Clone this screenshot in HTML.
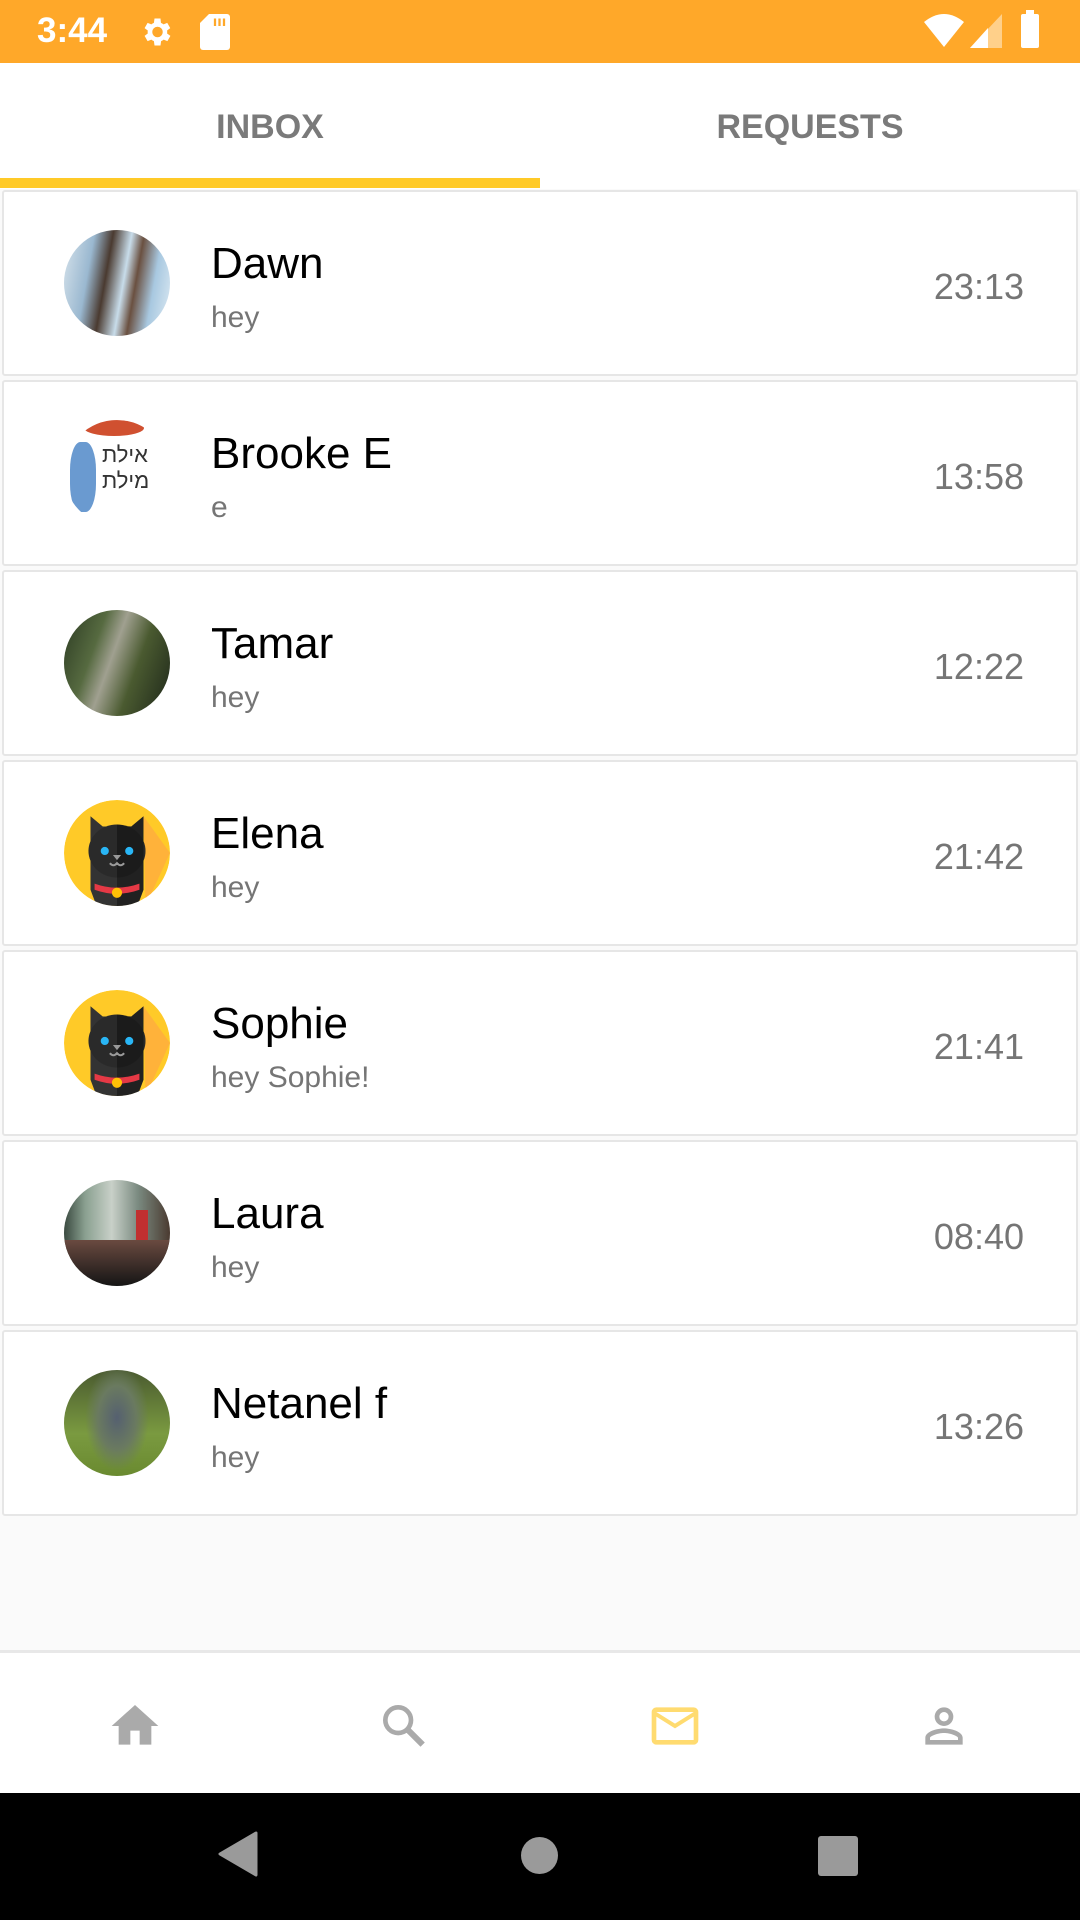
<!DOCTYPE html>
<html><head><meta charset="utf-8"><style>
*{margin:0;padding:0;box-sizing:border-box}
body{width:1080px;height:1920px;background:#fafafa;font-family:"Liberation Sans",Roboto,sans-serif;position:relative;overflow:hidden}
.status{position:absolute;top:0;left:0;width:1080px;height:63px;background:#ffa829;color:#fff}
.tabs{position:absolute;top:63px;left:0;width:1080px;height:126px;background:#fff}
.tab{position:absolute;top:0;width:540px;height:126px;line-height:128px;text-align:center;font-size:34px;font-weight:bold;color:#7a7a7a}
.ind{position:absolute;left:0;top:178px;width:540px;height:10px;background:#ffca28}
.card{position:absolute;left:2px;width:1076px;height:186px;background:#fff;border:2px solid #e6e6e6;border-radius:3px}
.av{position:absolute;left:60px;top:38px;width:106px;height:106px;border-radius:50%;overflow:hidden}
.nm{position:absolute;left:207px;top:47px;font-size:44px;color:#000}
.sb{position:absolute;left:207px;top:109px;font-size:30px;color:#757575}
.tm{position:absolute;right:52px;top:74px;font-size:36px;color:#757575}
.nav{position:absolute;top:1650px;left:0;width:1080px;height:143px;background:#fff;border-top:3px solid #e8e8e8}
.sys{position:absolute;top:1793px;left:0;width:1080px;height:127px;background:#000}
</style></head><body>
<div class="status">
<div style="position:absolute;left:37px;top:11px;font-size:35px;font-weight:bold">3:44</div>
<svg style="position:absolute;left:138px;top:14px" width="36" height="36" viewBox="0 0 24 24"><path fill="#fff" d="M19.4 13a7.5 7.5 0 000-2l2.1-1.6-2-3.5-2.5 1a7 7 0 00-1.7-1L15 3h-4l-.4 2.9a7 7 0 00-1.7 1l-2.5-1-2 3.5L6.5 11a7.5 7.5 0 000 2l-2.1 1.6 2 3.5 2.5-1a7 7 0 001.7 1L11 21h4l.4-2.9a7 7 0 001.7-1l2.5 1 2-3.5zM13 15.5A3.5 3.5 0 1113 8.5a3.5 3.5 0 010 7z"/></svg>
<svg style="position:absolute;left:200px;top:14px" width="30" height="36" viewBox="0 0 20 24"><path fill="#fff" d="M6 0h12a2 2 0 012 2v20a2 2 0 01-2 2H2a2 2 0 01-2-2V6z"/><path stroke="#ffa829" stroke-width="1.5" d="M10 3v5M13 3v5M16 3v5"/></svg>
<svg style="position:absolute;left:924px;top:14px" width="40" height="34" viewBox="0 0 40 34"><path fill="#fff" d="M0 8Q20-8 40 8L20 33z"/></svg>
<svg style="position:absolute;left:970px;top:14px" width="32" height="34" viewBox="0 0 32 34"><path fill="#ffd08a" d="M32 0V34H0z"/><path fill="#fff" d="M18 14V34H0z"/></svg>
<div style="position:absolute;left:1021px;top:14px;width:18px;height:34px;background:#fff;border-radius:2px"></div>
<div style="position:absolute;left:1026px;top:10px;width:8px;height:5px;background:#fff"></div>
</div>
<div class="tabs"><div class="tab" style="left:0">INBOX</div><div class="tab" style="left:540px">REQUESTS</div></div>
<div class="ind"></div>

<div class="card" style="top:190px"><div class="av" style="background:linear-gradient(100deg,#d8e4ec 0,#9ab8d0 25%,#4a3a30 40%,#c8dcea 55%,#6a5040 65%,#a8c8e0 80%,#e0ecf4 100%)"></div><div class="nm">Dawn</div><div class="sb">hey</div><div class="tm">23:13</div></div>
<div class="card" style="top:380px"><div class="av" style="background:#fff"><div style="position:absolute;left:6px;top:22px;width:26px;height:70px;background:#6a9ad0;border-radius:40%"></div><div style="position:absolute;left:20px;top:0;width:60px;height:16px;background:#d05030;border-radius:50%"></div><div style="position:absolute;left:38px;top:20px;font-size:22px;line-height:26px;color:#333;font-family:'Noto Sans CJK SC',sans-serif">אילת<br>מילת</div></div><div class="nm">Brooke E</div><div class="sb">e</div><div class="tm">13:58</div></div>
<div class="card" style="top:570px"><div class="av" style="background:linear-gradient(110deg,#2b3a22 0,#566a40 30%,#a0a090 45%,#4a5a30 65%,#2a3520 90%,#c03030 100%)"></div><div class="nm">Tamar</div><div class="sb">hey</div><div class="tm">12:22</div></div>
<div class="card" style="top:760px"><div class="av"><svg width="106" height="106" viewBox="0 0 104 104"><circle cx="52" cy="52" r="52" fill="#ffca28"/><path d="M78 16L104 52 80 104z" fill="#ffb23a"/><path d="M26 16L38 26H66L78 16V88L72 104H32L26 88z" fill="#333"/><ellipse cx="52" cy="50" rx="28" ry="26" fill="#2a2a2a"/><path d="M52 24V104H72L78 88V16L66 26z" fill="#000" opacity=".35"/><circle cx="40" cy="50" r="4" fill="#29b6f6"/><circle cx="64" cy="50" r="4" fill="#29b6f6"/><path d="M48 54h8l-4 5z" fill="#999"/><path d="M45 62q3.5 4 7 0q3.5 4 7 0" stroke="#999" stroke-width="2" fill="none"/><path d="M30 82Q52 90 74 82V88Q52 96 30 88z" fill="#e53945"/><circle cx="52" cy="91" r="5" fill="#ffc107"/></svg></div><div class="nm">Elena</div><div class="sb">hey</div><div class="tm">21:42</div></div>
<div class="card" style="top:950px"><div class="av"><svg width="106" height="106" viewBox="0 0 104 104"><circle cx="52" cy="52" r="52" fill="#ffca28"/><path d="M78 16L104 52 80 104z" fill="#ffb23a"/><path d="M26 16L38 26H66L78 16V88L72 104H32L26 88z" fill="#333"/><ellipse cx="52" cy="50" rx="28" ry="26" fill="#2a2a2a"/><path d="M52 24V104H72L78 88V16L66 26z" fill="#000" opacity=".35"/><circle cx="40" cy="50" r="4" fill="#29b6f6"/><circle cx="64" cy="50" r="4" fill="#29b6f6"/><path d="M48 54h8l-4 5z" fill="#999"/><path d="M45 62q3.5 4 7 0q3.5 4 7 0" stroke="#999" stroke-width="2" fill="none"/><path d="M30 82Q52 90 74 82V88Q52 96 30 88z" fill="#e53945"/><circle cx="52" cy="91" r="5" fill="#ffc107"/></svg></div><div class="nm">Sophie</div><div class="sb">hey Sophie!</div><div class="tm">21:41</div></div>
<div class="card" style="top:1140px"><div class="av" style="background:linear-gradient(90deg,#3a4a40 0,#8aa090 20%,#c8d0c8 45%,#7a8a80 70%,#4a3a30 100%)"><div style="position:absolute;left:0;top:60px;width:106px;height:46px;background:linear-gradient(180deg,#6a4a40,#151515)"></div><div style="position:absolute;left:72px;top:30px;width:12px;height:30px;background:#c03030"></div></div><div class="nm">Laura</div><div class="sb">hey</div><div class="tm">08:40</div></div>
<div class="card" style="top:1330px"><div class="av" style="background:radial-gradient(ellipse 30% 50% at 50% 45%,#556070 0,#6a7a60 60%,transparent 100%),linear-gradient(180deg,#4a5a30,#7a9a40 60%,#6a8a30)"></div><div class="nm">Netanel f</div><div class="sb">hey</div><div class="tm">13:26</div></div>

<div class="nav">
<svg style="position:absolute;left:107px;top:45px" width="56" height="56" viewBox="0 0 24 24"><path fill="#aaa" d="M10 20v-6h4v6h5v-8h3L12 3 2 12h3v8z"/></svg>
<svg style="position:absolute;left:376px;top:45px" width="56" height="56" viewBox="0 0 24 24"><circle cx="9.5" cy="9.5" r="5.5" fill="none" stroke="#aaa" stroke-width="2"/><path d="M13.5 13.5L20 20" stroke="#aaa" stroke-width="2.6"/></svg>
<svg style="position:absolute;left:647px;top:45px" width="56" height="56" viewBox="0 0 24 24"><path fill="#ffdb70" d="M20 4H4a2 2 0 00-2 2v12a2 2 0 002 2h16a2 2 0 002-2V6a2 2 0 00-2-2zm0 14H4V8l8 5 8-5zm-8-7L4 6h16z"/></svg>
<svg style="position:absolute;left:916px;top:45px" width="56" height="56" viewBox="0 0 24 24"><path fill="#aaa" d="M12 6a2 2 0 110 4 2 2 0 010-4m0 9c2.7 0 5.8 1.3 6 2v1H6v-1c.2-.7 3.3-2 6-2m0-11a4 4 0 100 8 4 4 0 000-8zm0 9c-2.7 0-8 1.3-8 4v3h16v-3c0-2.7-5.3-4-8-4z"/></svg>
</div>
<div class="sys">
<svg style="position:absolute;left:218px;top:38px" width="40" height="46" viewBox="0 0 40 46"><path fill="#9a9a9a" d="M38 2L2 23l36 21z" stroke="#9a9a9a" stroke-width="3" stroke-linejoin="round"/></svg>
<div style="position:absolute;left:521px;top:44px;width:37px;height:37px;border-radius:50%;background:#9a9a9a"></div>
<div style="position:absolute;left:818px;top:43px;width:40px;height:40px;border-radius:3px;background:#9a9a9a"></div>
</div>
</body></html>
